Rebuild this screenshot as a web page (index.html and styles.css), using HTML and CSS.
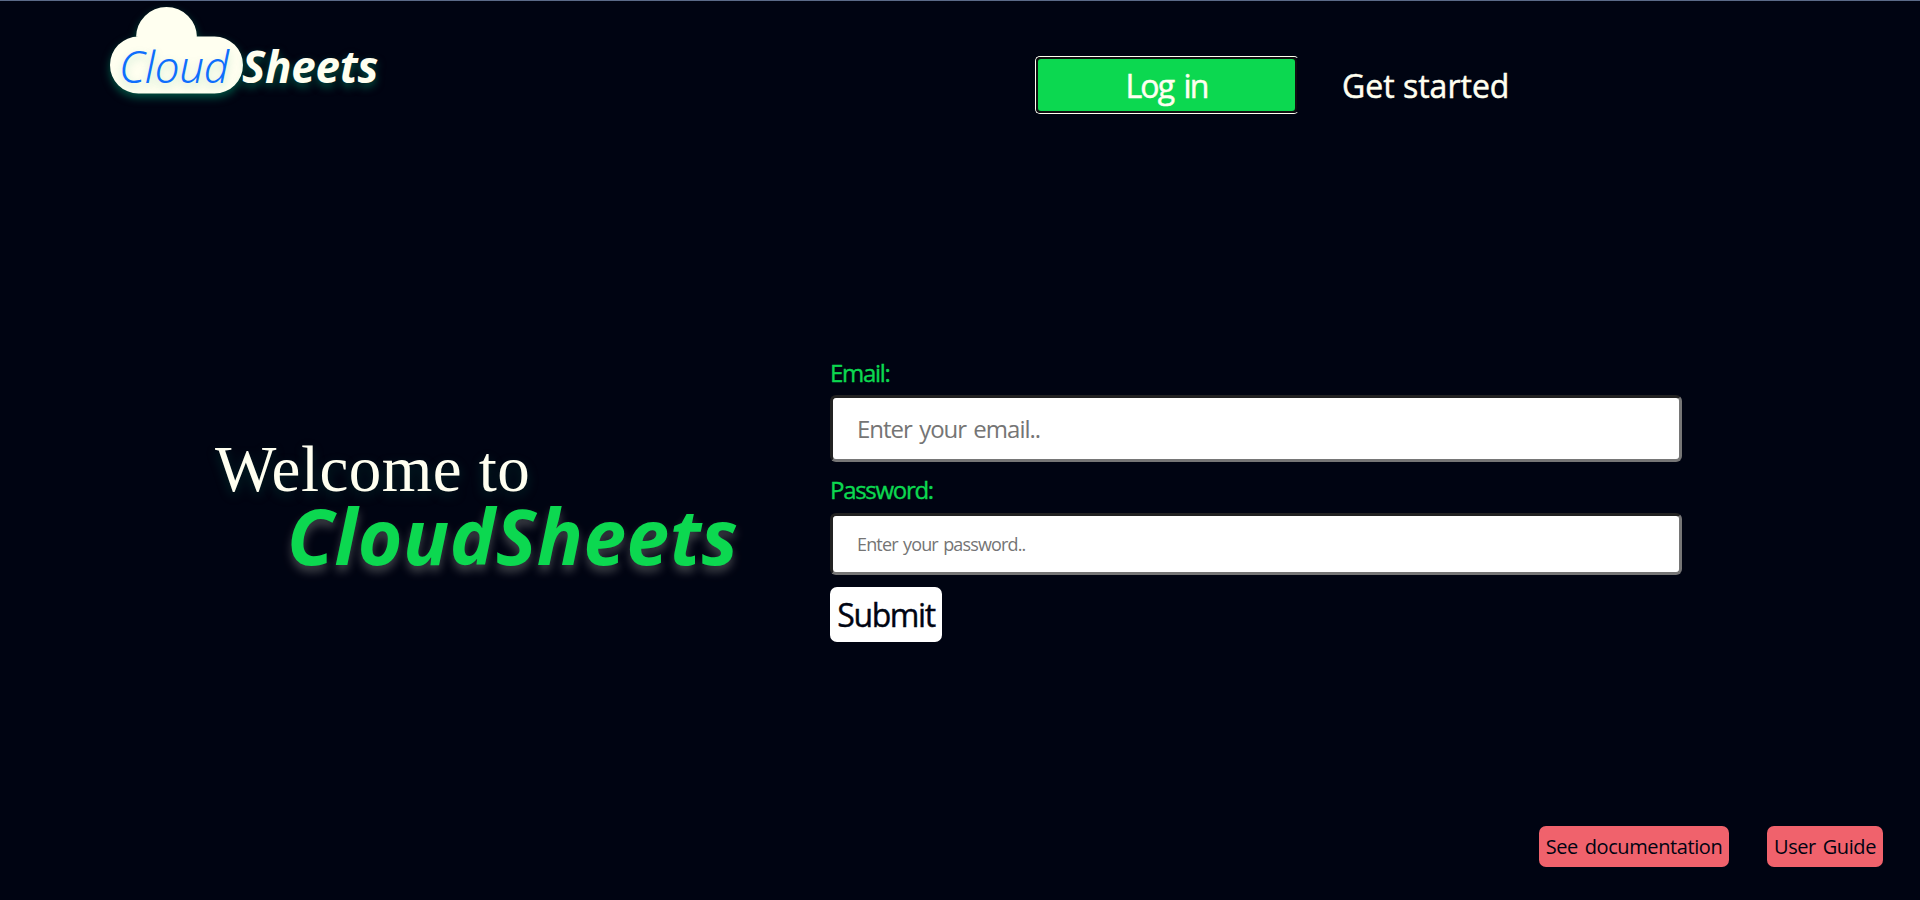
FILE: index.html
```html
<!DOCTYPE html>
<html lang="en">
<head>
<meta charset="utf-8">
<title>CloudSheets</title>
<link rel="stylesheet" href="styles.css">
</head>
<body>
<header class="header">
  <div class="logo">
    <svg class="cloud" width="133" height="87" viewBox="0 0 133 87"><path d="M28.500 29.500H26V30.500A30.500 30.500 0 0 1 87 30.500V29.500H104.500A28.500 28.500 0 0 1 104.500 86.500H28.500A28.500 28.500 0 0 1 28.500 29.500Z"/></svg>
    <span class="logo-cloud">Cloud</span><span class="logo-sheets">Sheets</span>
  </div>
  <nav class="nav">
    <button class="tab tab-active"><span class="login-text">Log in</span></button>
    <button class="tab tab-start"><span class="start-text">Get started</span></button>
  </nav>
</header>
<main class="main">
  <section class="welcome">
    <h1 class="welcome-line">Welcome to</h1>
    <h2 class="brand">CloudSheets</h2>
  </section>
  <form class="form">
    <label class="label label-email" for="email">Email:</label>
    <input class="input input-email" id="email" type="email" placeholder="Enter your email..">
    <label class="label label-password" for="password">Password:</label>
    <input class="input input-password" id="password" type="password" placeholder="Enter your password..">
    <button class="submit" type="button">Submit</button>
  </form>
</main>
<footer class="footer">
  <button class="link link-docs">See documentation</button>
  <button class="link link-guide">User Guide</button>
</footer>
</body>
</html>
```
FILE: styles.css
```css
* { box-sizing: border-box; }
body {
  margin: 0;
  height: 900px;
  overflow: hidden;
  display: flex;
  flex-direction: column;
  background: #000412;
  border-top: 1px solid #5a6a88;
  font-family: "Comic Sans MS", "Open Sans", sans-serif;
  color: #fffff0;
}
button { border: 0; padding: 0; font-family: inherit; font-weight: inherit; white-space: nowrap; }
.header { display: flex; height: 349px; flex: none; }
.logo {
  position: relative;
  width: 925px;
  margin-left: 110px;
  padding: 35px 0 0 9px;
  height: 110px;
  font: italic 44px/60px "Segoe UI", "Noto Sans", sans-serif;
  white-space: nowrap;
}
.cloud {
  position: absolute;
  left: 0;
  top: 6px;
  fill: #fffff0;
  overflow: visible;
  filter: drop-shadow(0 4px 4px rgba(0, 150, 110, .55));
}
.logo-cloud {
  position: relative;
  display: inline-block;
  width: 123px;
  font-weight: 300;
  letter-spacing: -.3px;
  color: #0d6efd;
  text-shadow: 0 4px 8px rgba(0, 150, 110, .25);
}
.logo-sheets {
  position: relative;
  font-weight: 700;
  letter-spacing: -.3px;
  text-shadow: 0 4px 8px rgba(0, 150, 110, .55);
}
.nav { display: flex; padding-top: 55px; }
.tab { height: 58px; font-size: 32px; line-height: 54px; color: #fffff0; background: none; -webkit-text-stroke: .5px currentColor; }
.tab-active {
  width: 264px;
  padding: 0 1px 0 0;
  border: 1px solid #fffff0;
  border-right-color: transparent;
  border-radius: 5px;
}
.login-text {
  display: block;
  height: 56px;
  border: 2px solid #101010;
  border-radius: 5px;
  background: #0cd850;
  letter-spacing: -1.9px;
  word-spacing: 4px;
}
.tab-start { margin-left: 43px; padding-top: 1px; }
.main { display: flex; height: 476px; flex: none; }
.welcome { width: 830px; padding-left: 215px; }
.welcome-line {
  margin: 83px 0 0;
  font: 400 65px/68px "Times New Roman", "Liberation Serif", serif;
  padding-top: 2px;
  letter-spacing: .45px;
  text-shadow: 0 4px 12px rgba(0, 150, 110, .25);
}
.brand {
  margin: 0 0 0 72px;
  font: italic 700 76.500px/64px "Segoe UI", "Noto Sans", sans-serif;
  letter-spacing: .5px;
  color: #0cd850;
  text-shadow: 0 6px 10px rgba(255, 255, 240, .25);
}
.form { display: flex; flex-direction: column; align-items: flex-start; width: 852px; }
.label { font-size: 24px; line-height: 34px; color: #0cd850; letter-spacing: -1.3px; -webkit-text-stroke: .4px currentColor; }
.label-email { margin-top: 6px; }
.label-password { margin-top: 11px; }
.input {
  width: 852px;
  padding: 0 24px;
  border: 3px solid;
  border-color: #222 #767676 #767676 #222;
  border-radius: 6px;
  background: #fff;
  font-family: inherit;
}
.input::placeholder { color: #757575; }
.input-email { margin-top: 5px; height: 67px; font-size: 24px; letter-spacing: -1px; word-spacing: 2px; }
.input-password { margin-top: 6px; height: 62px; font-size: 18px; letter-spacing: -.85px; word-spacing: 1.5px; }
.submit {
  margin-top: 12px;
  width: 112px;
  height: 55px;
  border-radius: 7px;
  background: #fff;
  color: #000412;
  font-size: 32px;
  letter-spacing: -1.4px;
  -webkit-text-stroke: .4px currentColor;
}
.footer { display: flex; justify-content: flex-end; gap: 38px; padding-right: 37px; }
.link { height: 41px; border-radius: 7px; background: #f0626c; color: #000412; font-size: 20px; letter-spacing: -.4px; word-spacing: 2px; }
.link-docs { width: 190px; }
.link-guide { width: 116px; }
```
